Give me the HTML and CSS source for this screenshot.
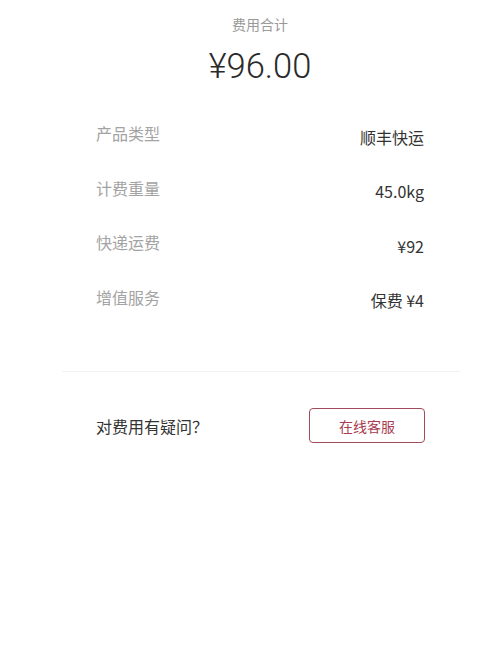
FILE: index.html
```html
<!DOCTYPE html>
<html lang="zh-CN">
<head>
    <meta charset="UTF-8">
    <meta name="viewport" content="width=device-width, initial-scale=1.0">
    <title>费用明细</title>
    <link rel="stylesheet" href="styles.css">
</head>
<body>
    <div class="page">
        <div class="total">
            <div class="total-label">费用合计</div>
            <div class="total-amount">¥96.00</div>
        </div>
        <div class="details">
            <div class="row">
                <span class="row-label">产品类型</span>
                <span class="row-value">顺丰快运</span>
            </div>
            <div class="row">
                <span class="row-label">计费重量</span>
                <span class="row-value">45.0kg</span>
            </div>
            <div class="row">
                <span class="row-label">快递运费</span>
                <span class="row-value">¥92</span>
            </div>
            <div class="row">
                <span class="row-label">增值服务</span>
                <span class="row-value">保费 ¥4</span>
            </div>
        </div>
        <div class="divider"></div>
        <div class="help">
            <span class="help-text">对费用有疑问？</span>
            <button class="service-button">在线客服</button>
        </div>
    </div>
</body>
</html>
```

FILE: styles.css
```css
body {
    margin: 0;
    padding: 0;
    background-color: #ffffff;
    font-family: "Noto Sans CJK SC", "Noto Sans", sans-serif;
    color: #333333;
}
.page {
    width: 500px;
    height: 666px;
    display: flex;
    flex-direction: column;
}
.total {
    display: flex;
    flex-direction: column;
    align-items: center;
    padding: 14px 0 0 20px;
}
.total-label {
    font-size: 14px;
    line-height: 20px;
    color: #9a9a9a;
}
.total-amount {
    margin-top: 12px;
    font-family: Roboto, "Liberation Sans", sans-serif;
    font-weight: 300;
    font-size: 34.5px;
    line-height: 40px;
    color: #2a2a2a;
}
.details {
    margin-top: 20px;
    padding: 0 76px 0 96px;
}
.row {
    height: 54.5px;
    display: flex;
    justify-content: space-between;
    align-items: center;
    font-size: 16px;
    line-height: 22px;
}
.row-label {
    color: #a3a3a3;
}
.row-value {
    margin-top: 7px;
    color: #333333;
}
.divider {
    margin: 47px 40px 0 62px;
    height: 1px;
    background-color: #f2f2f2;
}
.help {
    margin-top: 36px;
    padding: 0 75px 0 96px;
    display: flex;
    justify-content: space-between;
    align-items: center;
}
.help-text {
    font-size: 16px;
    color: #333333;
}
.service-button {
    width: 116px;
    height: 35px;
    background: #ffffff;
    border: 1.5px solid #a04c5b;
    border-radius: 4px;
    font-family: "Noto Sans CJK SC", sans-serif;
    font-size: 14px;
    color: #a83c50;
    padding: 0;
}
```
